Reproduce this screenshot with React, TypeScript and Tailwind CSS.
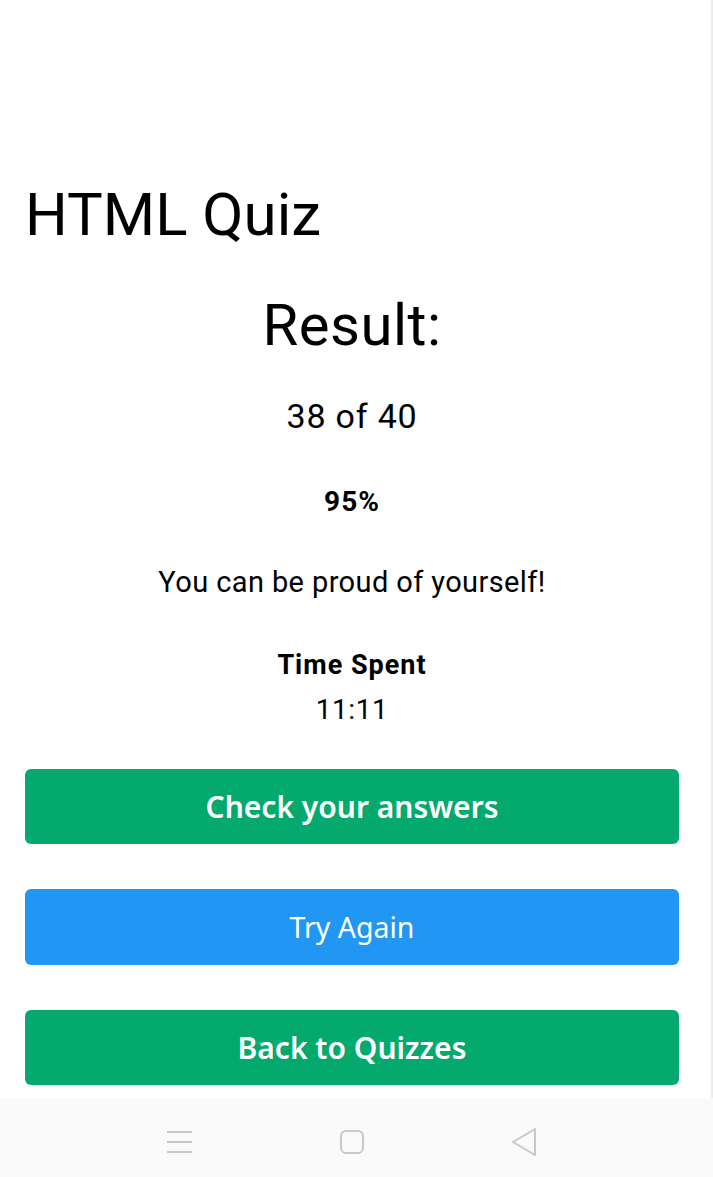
import React from "react";

const roboto = { fontFamily: "Roboto, 'Liberation Sans', sans-serif" };

// bottom system navigation bar
const NavBar = () => (
  <div className="h-[79px] bg-[#fafafa] flex items-center justify-center pr-[9px] pt-[8px]">
    <div className="flex items-center w-[372px] justify-between">
      <svg width="28" height="24" viewBox="0 0 28 24" fill="none" stroke="#c8c8c8" strokeWidth="2">
        <line x1="1" y1="2" x2="26" y2="2" />
        <line x1="1" y1="12" x2="26" y2="12" />
        <line x1="1" y1="22" x2="26" y2="22" />
      </svg>
      <svg width="26" height="26" viewBox="0 0 26 26" fill="none" stroke="#c8c8c8" strokeWidth="2">
        <rect x="2" y="2" width="22" height="22" rx="5" />
      </svg>
      <svg width="28" height="30" viewBox="0 0 28 30" fill="none" stroke="#c8c8c8" strokeWidth="2" strokeLinejoin="round">
        <path d="M25 2 L3 15 L25 28 Z" />
      </svg>
    </div>
  </div>
);

export default function App() {
  return (
    <div className="w-[713px] h-[1177px] bg-white flex flex-col overflow-hidden">
      <div className="flex flex-1">
        <main className="w-[704px] px-[25px] pt-[185px] text-black" style={roboto}>
          <h1 className="text-[60px] leading-[60px] font-normal">HTML Quiz</h1>

          <div className="text-center">
            <h2 className="mt-[51px] text-[58px] leading-[58px] font-normal tracking-[0.5px]">Result:</h2>
            <p className="mt-[45px] text-[34px] leading-[34px] tracking-[0.8px]">38 of 40</p>
            <p className="mt-[55px] text-[28px] leading-[28px] font-bold tracking-[1px]">95%</p>
            <p className="mt-[52px] text-[29px] leading-[29px] tracking-[0.4px]">You can be proud of yourself!</p>
            <p className="mt-[55px] text-[27px] leading-[27px] font-bold tracking-[1px]">Time Spent</p>
            <p className="mt-[17px] text-[28px] leading-[28px] tracking-[0.6px]">11:11</p>
          </div>

          <div
            className="mt-[45px] flex flex-col gap-[45px]"
            style={{ fontFamily: "'Noto Sans', 'Open Sans', sans-serif" }}
          >
            <button className="h-[75px] w-full rounded-[6px] bg-[#04aa6d] text-white text-[30px] font-semibold flex items-center justify-center">
              Check your answers
            </button>
            <button className="h-[76px] w-full rounded-[6px] bg-[#2196f3] text-white text-[28.5px] font-normal flex items-center justify-center">
              Try Again
            </button>
            <button className="h-[75px] w-full rounded-[6px] bg-[#04aa6d] text-white text-[30px] font-semibold flex items-center justify-center">
              Back to Quizzes
            </button>
          </div>
        </main>
        <div className="flex-1 flex justify-end">
          <div className="w-[2px] bg-[#ececec]" />
        </div>
      </div>
      <NavBar />
    </div>
  );
}
